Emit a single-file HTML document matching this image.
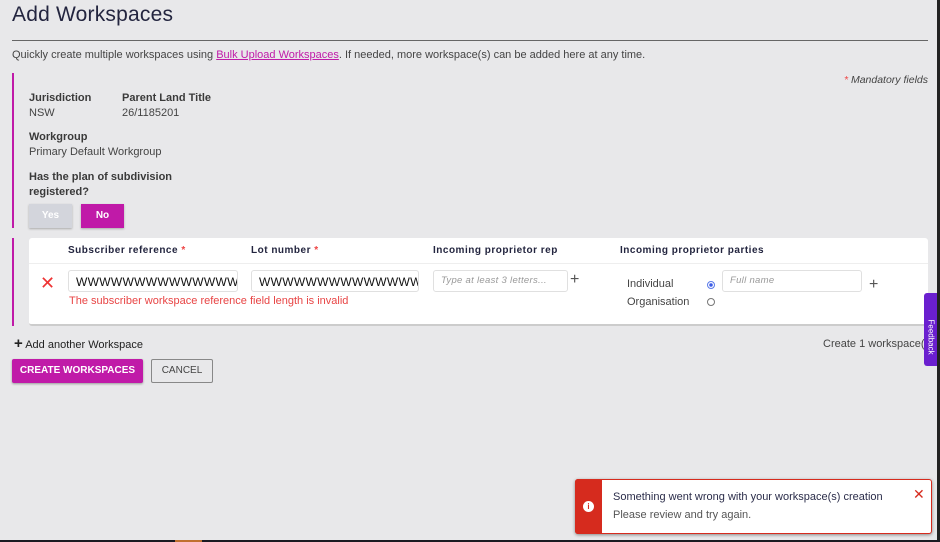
<!DOCTYPE html>
<html><head><style>
*{box-sizing:border-box;margin:0;padding:0}
body{width:940px;height:542px;background:#e8e8ea;font-family:"Liberation Sans",sans-serif;position:relative;overflow:hidden;color:#444}
.a{position:absolute}
.lbl{font-weight:bold;font-size:11px;color:#3a3a3a}
.val{font-size:11px;color:#444}
.h{font-weight:bold;font-size:10px;color:#23253f;letter-spacing:.5px}
.inp{background:#fff;border:1px solid #e0e0e0;border-radius:3px;height:22px;font-size:12px;color:#111;padding:4px 7px;overflow:hidden;white-space:nowrap;letter-spacing:.3px}
.ph{font-style:italic;color:#999;font-size:9.5px}
</style></head><body>
<div class="a" style="left:12px;top:3px;font-size:21px;color:#23253f;letter-spacing:.2px">Add Workspaces</div>
<div class="a" style="left:12px;top:40px;width:916px;height:1px;background:#666"></div>
<div class="a" style="left:12px;top:49px;font-size:11px;color:#444">Quickly create multiple workspaces using <span style="color:#c01aa8;text-decoration:underline">Bulk Upload Workspaces</span>. If needed, more workspace(s) can be added here at any time.</div>
<div class="a" style="right:12px;top:74px;font-size:10.5px;font-style:italic;color:#444"><span style="color:#e44">*</span> Mandatory fields</div>
<div class="a" style="left:12px;top:73px;width:2px;height:155px;background:#c01aa8"></div>
<div class="a lbl" style="left:29px;top:92px">Jurisdiction</div>
<div class="a val" style="left:29px;top:107px">NSW</div>
<div class="a lbl" style="left:122px;top:92px">Parent Land Title</div>
<div class="a val" style="left:122px;top:107px">26/1185201</div>
<div class="a lbl" style="left:29px;top:131px">Workgroup</div>
<div class="a val" style="left:29px;top:146px">Primary Default Workgroup</div>
<div class="a lbl" style="left:29px;top:170px;line-height:15px">Has the plan of subdivision<br>registered?</div>
<div class="a" style="left:29px;top:204px;width:43px;height:24px;background:#d3d5dc;color:#fff;font-size:10px;font-weight:bold;text-align:center;line-height:24px;box-shadow:0 1px 2px #aaa">Yes</div>
<div class="a" style="left:81px;top:204px;width:43px;height:24px;background:#c01aa8;color:#fff;font-size:10px;font-weight:bold;text-align:center;line-height:24px;box-shadow:0 1px 2px #aaa">No</div>
<div class="a" style="left:12px;top:238px;width:2px;height:88px;background:#c01aa8"></div>
<div class="a" style="left:29px;top:238px;width:899px;height:88px;background:#fff;border-radius:3px;border-bottom:2px solid #ccc"></div>
<div class="a" style="left:29px;top:263px;width:899px;height:1px;background:#eee"></div>
<div class="a h" style="left:68px;top:245px">Subscriber reference <span style="color:#e44">*</span></div>
<div class="a h" style="left:251px;top:245px">Lot number <span style="color:#e44">*</span></div>
<div class="a h" style="left:433px;top:245px">Incoming proprietor rep</div>
<div class="a h" style="left:620px;top:245px">Incoming proprietor parties</div>
<div class="a" style="left:40px;top:273px;font-size:18px;color:#e33;line-height:20px">✕</div>
<div class="a inp" style="left:68px;top:270px;width:170px">WWWWWWWWWWWWWWWW</div>
<div class="a inp" style="left:251px;top:270px;width:168px">WWWWWWWWWWWWWWWW</div>
<div class="a" style="left:69px;top:295px;font-size:11px;color:#e84444">The subscriber workspace reference field length is invalid</div>
<div class="a inp ph" style="left:433px;top:270px;width:135px">Type at least 3 letters...</div>
<div class="a" style="left:570px;top:272px;font-size:16px;color:#555;line-height:16px">+</div>
<div class="a val" style="left:627px;top:278px">Individual</div>
<div class="a val" style="left:627px;top:296px">Organisation</div>
<div class="a" style="left:707px;top:281px;width:8px;height:8px;border-radius:50%;border:1px solid #5b7be8;background:radial-gradient(#3b5be8 40%,#fff 45%)"></div>
<div class="a" style="left:707px;top:298px;width:8px;height:8px;border-radius:50%;border:1px solid #777"></div>
<div class="a inp ph" style="left:722px;top:270px;width:140px">Full name</div>
<div class="a" style="left:869px;top:277px;font-size:16px;color:#555;line-height:16px">+</div>
<div class="a" style="left:14px;top:337px;font-size:11px;color:#222;line-height:14px"><span style="font-size:15px;font-weight:bold">+</span> Add another Workspace</div>
<div class="a" style="left:823px;top:338px;font-size:11px;color:#444;white-space:nowrap">Create 1 workspace(s)</div>
<div class="a" style="left:924px;top:293px;width:14px;height:73px;background:#6a1fcf;border-radius:3px 0 0 3px"></div>
<div class="a" style="left:923px;top:323px;color:#fff;font-size:8px;transform:rotate(90deg);transform-origin:center;width:16px">Feedback</div>
<div class="a" style="left:12px;top:359px;width:131px;height:24px;background:#c01aa8;color:#fff;font-size:10px;font-weight:bold;text-align:center;line-height:24px;border-radius:2px;box-shadow:0 1px 2px #999">CREATE WORKSPACES</div>
<div class="a" style="left:151px;top:359px;width:62px;height:24px;border:1px solid #888;color:#444;font-size:10px;text-align:center;line-height:22px;border-radius:2px">CANCEL</div>
<div class="a" style="left:575px;top:479px;width:357px;height:55px;background:#fff;border:1px solid #d62b1e;border-radius:3px;box-shadow:0 1px 3px #888"></div>
<div class="a" style="left:575px;top:479px;width:27px;height:55px;background:#d62b1e;border-radius:3px 0 0 3px"></div>
<div class="a" style="left:583px;top:501px;width:11px;height:11px;border-radius:50%;background:#fff;color:#d62b1e;font-size:8px;font-weight:bold;text-align:center;line-height:11px">i</div>
<div class="a" style="left:613px;top:491px;font-size:11px;color:#2b2d4a">Something went wrong with your workspace(s) creation</div>
<div class="a" style="left:613px;top:509px;font-size:11px;color:#555">Please review and try again.</div>
<div class="a" style="left:913px;top:486px;font-size:14px;color:#d62b1e">✕</div>
<div class="a" style="left:937px;top:0;width:3px;height:542px;background:#222"></div>
<div class="a" style="left:0;top:540px;width:940px;height:2px;background:#1a1a22"></div>
<div class="a" style="left:175px;top:540px;width:27px;height:2px;background:#c07030"></div>
</body></html>
